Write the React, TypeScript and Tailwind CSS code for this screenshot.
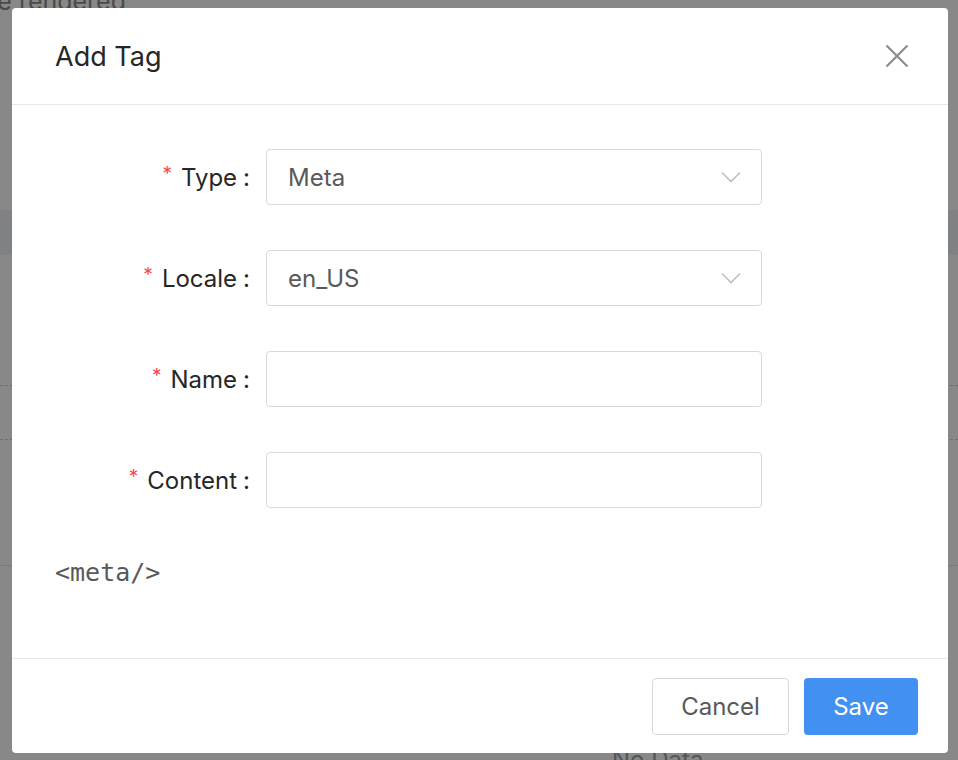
import React from "react";

function Chevron() {
  return (
    <svg width="20" height="12" viewBox="0 0 20 12" fill="none" className="shrink-0">
      <path d="M1 1.5 L10 10.5 L19 1.5" stroke="#bfbfbf" strokeWidth="1.6" />
    </svg>
  );
}

function CloseX() {
  return (
    <svg width="24" height="24" viewBox="0 0 24 24" fill="none">
      <path d="M1.5 1.5 L22.5 22.5 M22.5 1.5 L1.5 22.5" stroke="#8c8c8c" strokeWidth="2.2" />
    </svg>
  );
}

function Row({ label, children }: { label: string; children?: React.ReactNode }) {
  return (
    <div className="flex items-center h-[56px]">
      <div className="w-[240px] flex justify-end items-center pt-[2px] text-[24px] text-[#262626]">
        <span className="text-[#f5484f] text-[19px] mr-[9px] relative top-[-4px]">*</span>
        <span>{label}</span>
        <span className="ml-[6px] mr-[2px]">:</span>
      </div>
      <div className="ml-[14px] w-[496px] h-[56px] border border-[#d9d9d9] rounded-[4px] flex items-center pl-[21px] pr-[20px] text-[24px] text-[#595959]">
        {children}
      </div>
    </div>
  );
}

export default function App() {
  return (
    <div className="relative w-[958px] h-[760px] overflow-hidden bg-[#888888] font-['Inter',sans-serif]">
      {/* background page (dimmed) */}
      <div className="flex flex-col w-full h-full">
        <div className="h-[20px] relative">
          <div className="absolute left-0 top-[-17px] w-[126px] flex justify-end">
            <span className="text-[25px] text-[#4a4a4a] whitespace-nowrap">will be rendered</span>
          </div>
        </div>
        <div className="h-[190px]" />
        <div className="h-[45px] bg-[#808184]" />
        <div className="h-[130px]" />
        <div className="h-0 border-t border-dashed border-[#6f6f6f]" />
        <div className="h-[53px]" />
        <div className="h-0 border-t border-dashed border-[#6f6f6f]" />
        <div className="h-[125px]" />
        <div className="h-0 border-t border-[#7a7a7a]" />
        <div className="flex-1 relative">
          <span className="absolute left-[612px] top-[176px] text-[24px] text-[#555] whitespace-nowrap">No Data</span>
        </div>
      </div>

      {/* modal */}
      <div className="absolute left-[12px] top-[8px] w-[936px] h-[745px] bg-white rounded-[4px] flex flex-col">
        <div className="h-[97px] flex items-center justify-between pl-[43px] pr-[39px] border-b border-[#e8e8e8] shrink-0">
          <span className="text-[27px] text-[#262626] pt-[2px]">Add Tag</span>
          <CloseX />
        </div>
        <div className="flex-1 flex flex-col pt-[44px]">
          <div className="flex flex-col gap-[45px]">
            <Row label="Type">
              <span className="flex-1 pt-[2px]">Meta</span>
              <Chevron />
            </Row>
            <Row label="Locale">
              <span className="flex-1 pt-[2px]">en_US</span>
              <Chevron />
            </Row>
            <Row label="Name" />
            <Row label="Content" />
          </div>
          <div className="mt-[46px] pl-[43px] text-[25px] text-[#595959] font-['DejaVu_Sans_Mono',monospace]">
            &lt;meta/&gt;
          </div>
        </div>
        <div className="h-[95px] shrink-0 border-t border-[#e8e8e8] flex items-center justify-end pr-[30px] gap-[15px]">
          <button className="w-[137px] h-[57px] pt-[2px] border border-[#d9d9d9] rounded-[4px] bg-white text-[24px] text-[#595959]">
            Cancel
          </button>
          <button className="w-[114px] h-[57px] pt-[2px] rounded-[4px] bg-[#4290f2] text-[24px] text-white">
            Save
          </button>
        </div>
      </div>
    </div>
  );
}
